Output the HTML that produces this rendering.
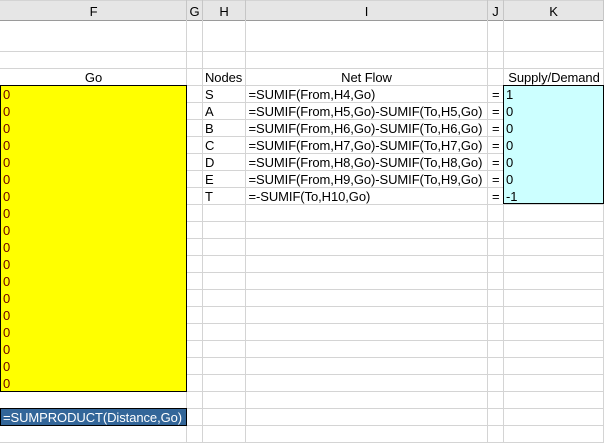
<!DOCTYPE html>
<html><head><meta charset="utf-8"><style>
html,body{margin:0;padding:0;background:#fff}
#p{position:relative;width:604px;height:443px;overflow:hidden;background:#fff;font:13px/17px "Liberation Sans",Arial,sans-serif;letter-spacing:-.08px;color:#000}
#p div{position:absolute;box-sizing:border-box}
.h{background:#d4d4d4;height:1px;left:0;width:604px}
.v{background:#d4d4d4;width:1px;top:20px;height:423px}
.t{white-space:pre;height:17px}
.c{text-align:center}
.hv{background:#c6c6c6;width:1px;top:0;height:20px}
</style></head><body><div id="p">
<div style="left:0;top:0;width:604px;height:20px;background:#e6e6e6"></div>
<div style="left:0;top:0;width:604px;height:1px;background:#d4d4d4"></div>
<div style="left:0;top:20px;width:603px;height:1px;background:#9a9a9a"></div>
<div class="hv" style="left:186px"></div><div class="hv" style="left:202px"></div><div class="hv" style="left:245px"></div><div class="hv" style="left:487px"></div><div class="hv" style="left:503px"></div><div class="hv" style="left:603px"></div>
<div class="t c" style="left:0;width:187px;top:3px">F</div>
<div class="t c" style="left:187px;width:15px;top:3px">G</div>
<div class="t c" style="left:203px;width:42px;top:3px">H</div>
<div class="t c" style="left:246px;width:241px;top:3px">I</div>
<div class="t c" style="left:488px;width:15px;top:3px">J</div>
<div class="t c" style="left:504px;width:99px;top:3px">K</div>

<div class="h" style="top:51px"></div><div class="h" style="top:68px"></div><div class="h" style="top:85px"></div><div class="h" style="top:102px"></div><div class="h" style="top:119px"></div><div class="h" style="top:136px"></div><div class="h" style="top:153px"></div><div class="h" style="top:170px"></div><div class="h" style="top:187px"></div><div class="h" style="top:204px"></div><div class="h" style="top:221px"></div><div class="h" style="top:238px"></div><div class="h" style="top:255px"></div><div class="h" style="top:272px"></div><div class="h" style="top:289px"></div><div class="h" style="top:306px"></div><div class="h" style="top:323px"></div><div class="h" style="top:340px"></div><div class="h" style="top:357px"></div><div class="h" style="top:374px"></div><div class="h" style="top:391px"></div><div class="h" style="top:408px"></div><div class="h" style="top:425px"></div><div class="h" style="top:442px"></div>
<div class="v" style="left:186px"></div><div class="v" style="left:202px"></div><div class="v" style="left:245px"></div><div class="v" style="left:487px"></div><div class="v" style="left:503px"></div><div class="v" style="left:603px"></div>

<div style="left:0;top:85px;width:187px;height:307px;background:#ffff00;border:1px solid #000"></div>
<div style="left:503px;top:85px;width:101px;height:119px;background:#ccffff;border:1px solid #000"></div>
<div style="left:0;top:408px;width:187px;height:18px;background:#336699;border:1px solid #000"></div>

<div class="t c" style="left:0;width:187px;top:69px">Go</div>
<div class="t" style="left:205px;top:69px">Nodes</div>
<div class="t c" style="left:246px;width:241px;top:69px">Net Flow</div>
<div class="t c" style="left:504px;width:100px;top:69px">Supply/Demand</div>

<div class="t" style="left:3px;top:86px;color:#700000">0</div><div class="t" style="left:3px;top:103px;color:#700000">0</div><div class="t" style="left:3px;top:120px;color:#700000">0</div><div class="t" style="left:3px;top:137px;color:#700000">0</div><div class="t" style="left:3px;top:154px;color:#700000">0</div><div class="t" style="left:3px;top:171px;color:#700000">0</div><div class="t" style="left:3px;top:188px;color:#700000">0</div><div class="t" style="left:3px;top:205px;color:#700000">0</div><div class="t" style="left:3px;top:222px;color:#700000">0</div><div class="t" style="left:3px;top:239px;color:#700000">0</div><div class="t" style="left:3px;top:256px;color:#700000">0</div><div class="t" style="left:3px;top:273px;color:#700000">0</div><div class="t" style="left:3px;top:290px;color:#700000">0</div><div class="t" style="left:3px;top:307px;color:#700000">0</div><div class="t" style="left:3px;top:324px;color:#700000">0</div><div class="t" style="left:3px;top:341px;color:#700000">0</div><div class="t" style="left:3px;top:358px;color:#700000">0</div><div class="t" style="left:3px;top:375px;color:#700000">0</div>

<div class="t" style="left:205px;top:86px">S</div>
<div class="t" style="left:205px;top:103px">A</div>
<div class="t" style="left:205px;top:120px">B</div>
<div class="t" style="left:205px;top:137px">C</div>
<div class="t" style="left:205px;top:154px">D</div>
<div class="t" style="left:205px;top:171px">E</div>
<div class="t" style="left:205px;top:188px">T</div>

<div class="t" style="left:248.5px;top:86px">=SUMIF(From,H4,Go)</div>
<div class="t" style="left:248.5px;top:103px">=SUMIF(From,H5,Go)-SUMIF(To,H5,Go)</div>
<div class="t" style="left:248.5px;top:120px">=SUMIF(From,H6,Go)-SUMIF(To,H6,Go)</div>
<div class="t" style="left:248.5px;top:137px">=SUMIF(From,H7,Go)-SUMIF(To,H7,Go)</div>
<div class="t" style="left:248.5px;top:154px">=SUMIF(From,H8,Go)-SUMIF(To,H8,Go)</div>
<div class="t" style="left:248.5px;top:171px">=SUMIF(From,H9,Go)-SUMIF(To,H9,Go)</div>
<div class="t" style="left:248.5px;top:188px">=-SUMIF(To,H10,Go)</div>

<div class="t" style="left:492px;top:86px">=</div><div class="t" style="left:492px;top:103px">=</div><div class="t" style="left:492px;top:120px">=</div><div class="t" style="left:492px;top:137px">=</div><div class="t" style="left:492px;top:154px">=</div><div class="t" style="left:492px;top:171px">=</div><div class="t" style="left:492px;top:188px">=</div>

<div class="t" style="left:506px;top:86px">1</div><div class="t" style="left:506px;top:103px">0</div><div class="t" style="left:506px;top:120px">0</div><div class="t" style="left:506px;top:137px">0</div><div class="t" style="left:506px;top:154px">0</div><div class="t" style="left:506px;top:171px">0</div><div class="t" style="left:506px;top:188px">-1</div>

<div class="t" style="left:3px;top:409px;color:#fff">=SUMPRODUCT(Distance,Go)</div>
</div></body></html>
